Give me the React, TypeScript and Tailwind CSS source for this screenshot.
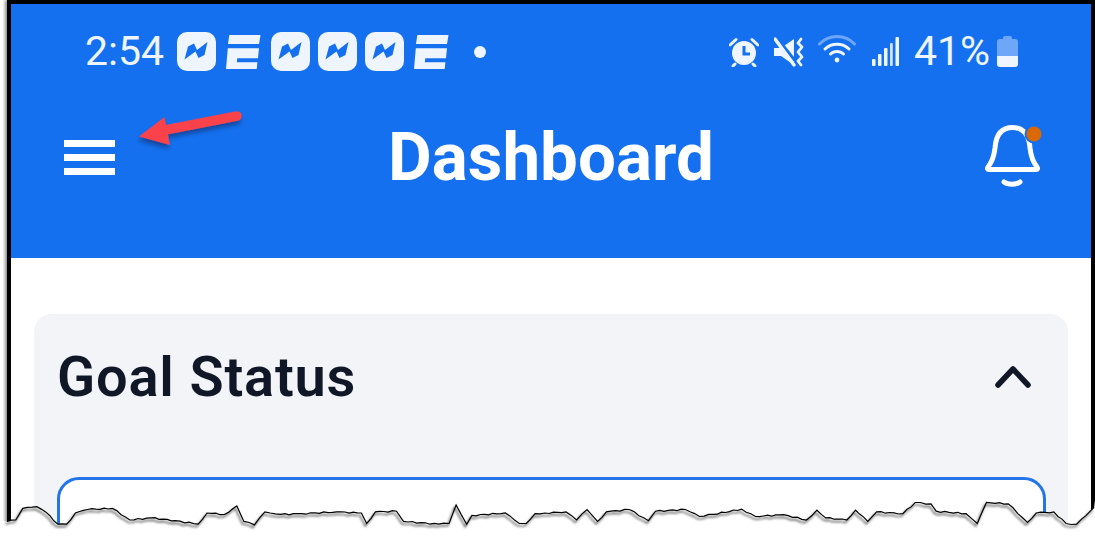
import { Fragment } from "react";

// torn paper edge, points read off the reference
const TORN_LEFT = [
  [20, 232], [45, 228], [65, 195], [105, 190], [130, 205], [165, 240], [190, 240], [215, 208], [250, 198], [320, 195],
  [370, 228], [430, 222], [500, 230], [565, 240], [590, 208], [640, 212], [675, 188], [695, 232], [725, 242], [755, 205],
  [800, 212], [860, 210], [960, 205], [1030, 208], [1045, 238], [1070, 205], [1130, 203], [1150, 232], [1250, 240],
  [1280, 238], [1300, 185], [1330, 240], [1345, 215], [1440, 208], [1480, 238], [1500, 238], [1525, 210],
];
const TORN_RIGHT = [
  [0, 208], [60, 205], [90, 228], [120, 198], [150, 232], [175, 205], [240, 198], [295, 230], [315, 203], [400, 198],
  [440, 218], [480, 212], [560, 197], [600, 218], [680, 213], [745, 228], [775, 200], [800, 222], [860, 228], [885, 200],
  [920, 232], [945, 205], [1020, 210], [1055, 178], [1100, 182], [1115, 203], [1200, 210], [1232, 238], [1258, 178],
  [1320, 182], [1375, 235], [1400, 208], [1450, 205], [1485, 238], [1515, 240], [1530, 225], [1565, 192],
];

function tornPoints() {
  const raw = [
    ...TORN_LEFT.map(([x, y]) => [x / 2.85, 440 + y / 2.85]),
    ...TORN_RIGHT.map(([x, y]) => [545 + x / 2.85, 440 + y / 2.85]),
  ];
  const out: number[][] = [];
  raw.forEach(([x, y], i) => {
    out.push([x, y]);
    const next = raw[i + 1];
    if (!next) return;
    // small jitter so the line doesn't look ruled
    const steps = Math.floor((next[0] - x) / 4);
    for (let s = 1; s < steps; s++) {
      const t = s / steps;
      out.push([x + (next[0] - x) * t, y + (next[1] - y) * t + Math.sin(x * 3.1 + s * 2.3) * 0.7]);
    }
  });
  return out;
}

function TornEdge() {
  const pts = tornPoints();
  const line = pts.map(([x, y]) => `${x.toFixed(1)},${y.toFixed(1)}`).join(" ");
  return (
    <svg className="absolute inset-0" width={1095} height={537} viewBox="0 0 1095 537" fill="none">
      <defs>
        <filter id="tornShadow" x="-5%" y="-50%" width="110%" height="200%">
          <feDropShadow dx="-1.5" dy="2.5" stdDeviation="1.3" floodColor="#000" floodOpacity="0.8" />
        </filter>
      </defs>
      <polygon points={`0,537 0,521 ${line} 1095,500 1095,537`} fill="#fff" />
      <polyline points={line} stroke="#000" strokeWidth="1.2" filter="url(#tornShadow)" />
    </svg>
  );
}

function ArrowNote() {
  return (
    <svg className="absolute left-[130px] top-[105px]" width={120} height={60} viewBox="130 105 120 60" fill="none">
      <defs>
        <filter id="arrowShadow" x="-20%" y="-40%" width="140%" height="200%">
          <feDropShadow dx="-1" dy="4" stdDeviation="2" floodColor="#0a2a66" floodOpacity="0.6" />
        </filter>
      </defs>
      <g filter="url(#arrowShadow)">
        <path d="M165 130 L237 116" stroke="#f9434a" strokeWidth="9.5" strokeLinecap="round" />
        <path d="M139 136.5 L164.5 117 L170 145 Z" fill="#f9434a" />
      </g>
    </svg>
  );
}

function MessengerTile() {
  return (
    <svg width={39} height={39} viewBox="0 0 39 39">
      <rect width="39" height="39" rx="10" fill="#eef5ff" />
      <path d="M7.5 27.5 L11 14.5 L17 11.5 L20 18 L30.5 10 L27.5 23 L21.5 26 L18.5 19.5 Z" fill="#1570ef" />
    </svg>
  );
}

function ELogo() {
  return (
    <svg width={35} height={35} viewBox="0 0 35 35" fill="#eef5ff">
      <path d="M3.3 1 H34.5 L33 10 H2 Z" />
      <path d="M1.8 14.3 H33 L32 24.3 H11.3 L10.8 28.3 H31.4 L30.7 35 H0 Z" />
    </svg>
  );
}

function AlarmIcon() {
  return (
    <svg width={30} height={30} viewBox="0 0 30 30">
      <circle cx="15" cy="16" r="12" fill="#eef5ff" />
      <path d="M15 9 V17 H21" stroke="#1570ef" strokeWidth="3" fill="none" />
      <path d="M1 8 L7 2.5 M29 8 L23 2.5" stroke="#eef5ff" strokeWidth="3" strokeLinecap="round" />
      <path d="M6 27 L4 29 M24 27 L26 29" stroke="#eef5ff" strokeWidth="3" strokeLinecap="round" />
    </svg>
  );
}

function VibrateMuteIcon() {
  return (
    <svg width={30} height={30} viewBox="0 0 30 30">
      <path d="M0 11 H7 L20 2 V28 L7 19 H0 Z" fill="#eef5ff" />
      <path d="M3 1 L22 25" stroke="#1570ef" strokeWidth="3" />
      <path d="M1 2 L20 28" stroke="#eef5ff" strokeWidth="3.4" strokeLinecap="round" />
      <path
        d="M27 2 L24 6 L28 10 L24 15 L28 20 L24 24 L27 28"
        stroke="#eef5ff"
        strokeWidth="2.8"
        strokeLinecap="round"
        strokeLinejoin="round"
        fill="none"
      />
    </svg>
  );
}

function WifiIcon() {
  return (
    <svg width={38} height={29} viewBox="0 0 38 29" fill="none" strokeLinecap="round">
      <path d="M1.5 10 C11 0 27 0 36.5 10" stroke="#6ea6f8" strokeWidth="3" />
      <path d="M7 15 C13.5 8.5 24.5 8.5 31 15" stroke="#eef5ff" strokeWidth="3" />
      <path d="M12.5 20 C16 16.5 22 16.5 25.5 20" stroke="#eef5ff" strokeWidth="3" />
      <circle cx="19" cy="26" r="2.4" fill="#eef5ff" />
    </svg>
  );
}

function SignalIcon() {
  return (
    <svg width={27} height={29} viewBox="0 0 27 29" fill="#eef5ff">
      <rect x="0" y="22" width="3.5" height="7" rx="1" />
      <rect x="6" y="17" width="3.5" height="12" rx="1" />
      <rect x="12" y="11" width="3.5" height="18" rx="1" />
      <rect x="18" y="6" width="2.8" height="23" rx="1" opacity="0.85" />
      <rect x="23.5" y="0" width="3.5" height="29" rx="1" />
    </svg>
  );
}

function BatteryIcon() {
  return (
    <svg width={21} height={31} viewBox="0 0 21 31">
      <path d="M6 3 V2 Q6 0 8 0 H13 Q15 0 15 2 V3 H18 Q21 3 21 6 V20 H0 V6 Q0 3 3 3 Z" fill="#6ea6f8" />
      <path d="M0 20 H21 V28 Q21 31 18 31 H3 Q0 31 0 28 Z" fill="#eef5ff" />
    </svg>
  );
}

function BellIcon() {
  return (
    <svg width={60} height={66} viewBox="0 0 60 66" fill="none">
      <path
        d="M5 45 C9 40 11 35 12 26 C13 12 19 5.5 29.5 5.5 C40 5.5 46 12 47 26 C48 35 50 40 54 45 Q55.5 47.5 53 47.5 H6 Q3.5 47.5 5 45 Z"
        stroke="#fff"
        strokeWidth="5"
        strokeLinejoin="round"
      />
      <path d="M21 60 C25 63 33 63 37 60" stroke="#fff" strokeWidth="5" strokeLinecap="round" />
      <circle cx="51" cy="12" r="9.5" fill="#1570ef" />
      <circle cx="51" cy="12" r="7.5" fill="#dc6803" />
    </svg>
  );
}

function Hamburger() {
  return (
    <div className="flex w-[51px] flex-col gap-[7px]">
      {[0, 1, 2].map((i) => (
        <div key={i} className="h-[7px] bg-white" />
      ))}
    </div>
  );
}

const NOTIFS = ["m", "e", "m", "m", "m", "e"];

export default function App() {
  return (
    <div className="relative h-[537px] w-[1095px] overflow-hidden bg-white font-['Roboto',sans-serif]">
      <div className="ml-[7px] h-[537px] border-x-4 border-t-4 border-black bg-white shadow-[-2px_0_3px_rgba(0,0,0,0.45)]">
        {/* Header */}
        <header className="h-[254px] bg-[#1570ef]">
          <div className="flex items-center pl-[74px] pr-[73px] pt-[28px] text-[41px] leading-[39px] text-[#eef5ff]">
            <span className="mr-[13px] w-[79px]">2:54</span>
            <div className="flex items-center">
              {NOTIFS.map((n, i) => (
                <Fragment key={i}>
                  {n === "m" ? (
                    <div className="mr-[8px]">
                      <MessengerTile />
                    </div>
                  ) : (
                    <div className="ml-[2px] mr-[10px]">
                      <ELogo />
                    </div>
                  )}
                </Fragment>
              ))}
              <div className="ml-[15px] h-[12px] w-[12px] rounded-full bg-[#eef5ff]" />
            </div>
            <div className="ml-auto flex items-center">
              <AlarmIcon />
              <div className="ml-[15px]">
                <VibrateMuteIcon />
              </div>
              <div className="mb-[6px] ml-[14px]">
                <WifiIcon />
              </div>
              <div className="ml-[16px]">
                <SignalIcon />
              </div>
              <span className="ml-[15px] w-[75px] whitespace-nowrap">41%</span>
              <div className="ml-[8px]">
                <BatteryIcon />
              </div>
            </div>
          </div>
          <div className="mt-[46px] grid grid-cols-[1fr_auto_1fr] items-center px-[53px]">
            <Hamburger />
            <h1 className="text-[67.3px] font-bold leading-[80px] text-white">Dashboard</h1>
            <div className="-mr-[5px] mb-[4px] flex justify-end">
              <BellIcon />
            </div>
          </div>
        </header>

        {/* Goal Status card */}
        <section className="mx-[23px] mt-[56px] h-[300px] rounded-[18px] bg-[#f2f4f7] pl-[23px] pr-[22px]">
          <div className="flex items-center justify-between pr-[15px] pt-[31px]">
            <h2 className="text-[56px] font-semibold leading-[64px] tracking-[0.8px] text-[#101828]">Goal Status</h2>
            <svg className="-mt-[2px]" width={36} height={24} viewBox="0 0 36 24" fill="none">
              <path d="M3 21 L18 5 L33 21" stroke="#101828" strokeWidth="5.5" strokeLinecap="round" strokeLinejoin="round" />
            </svg>
          </div>
          <div className="mt-[68px] h-[200px] rounded-[22px] border-[3px] border-[#2575ea] bg-white" />
        </section>
      </div>

      <ArrowNote />
      <TornEdge />
    </div>
  );
}
